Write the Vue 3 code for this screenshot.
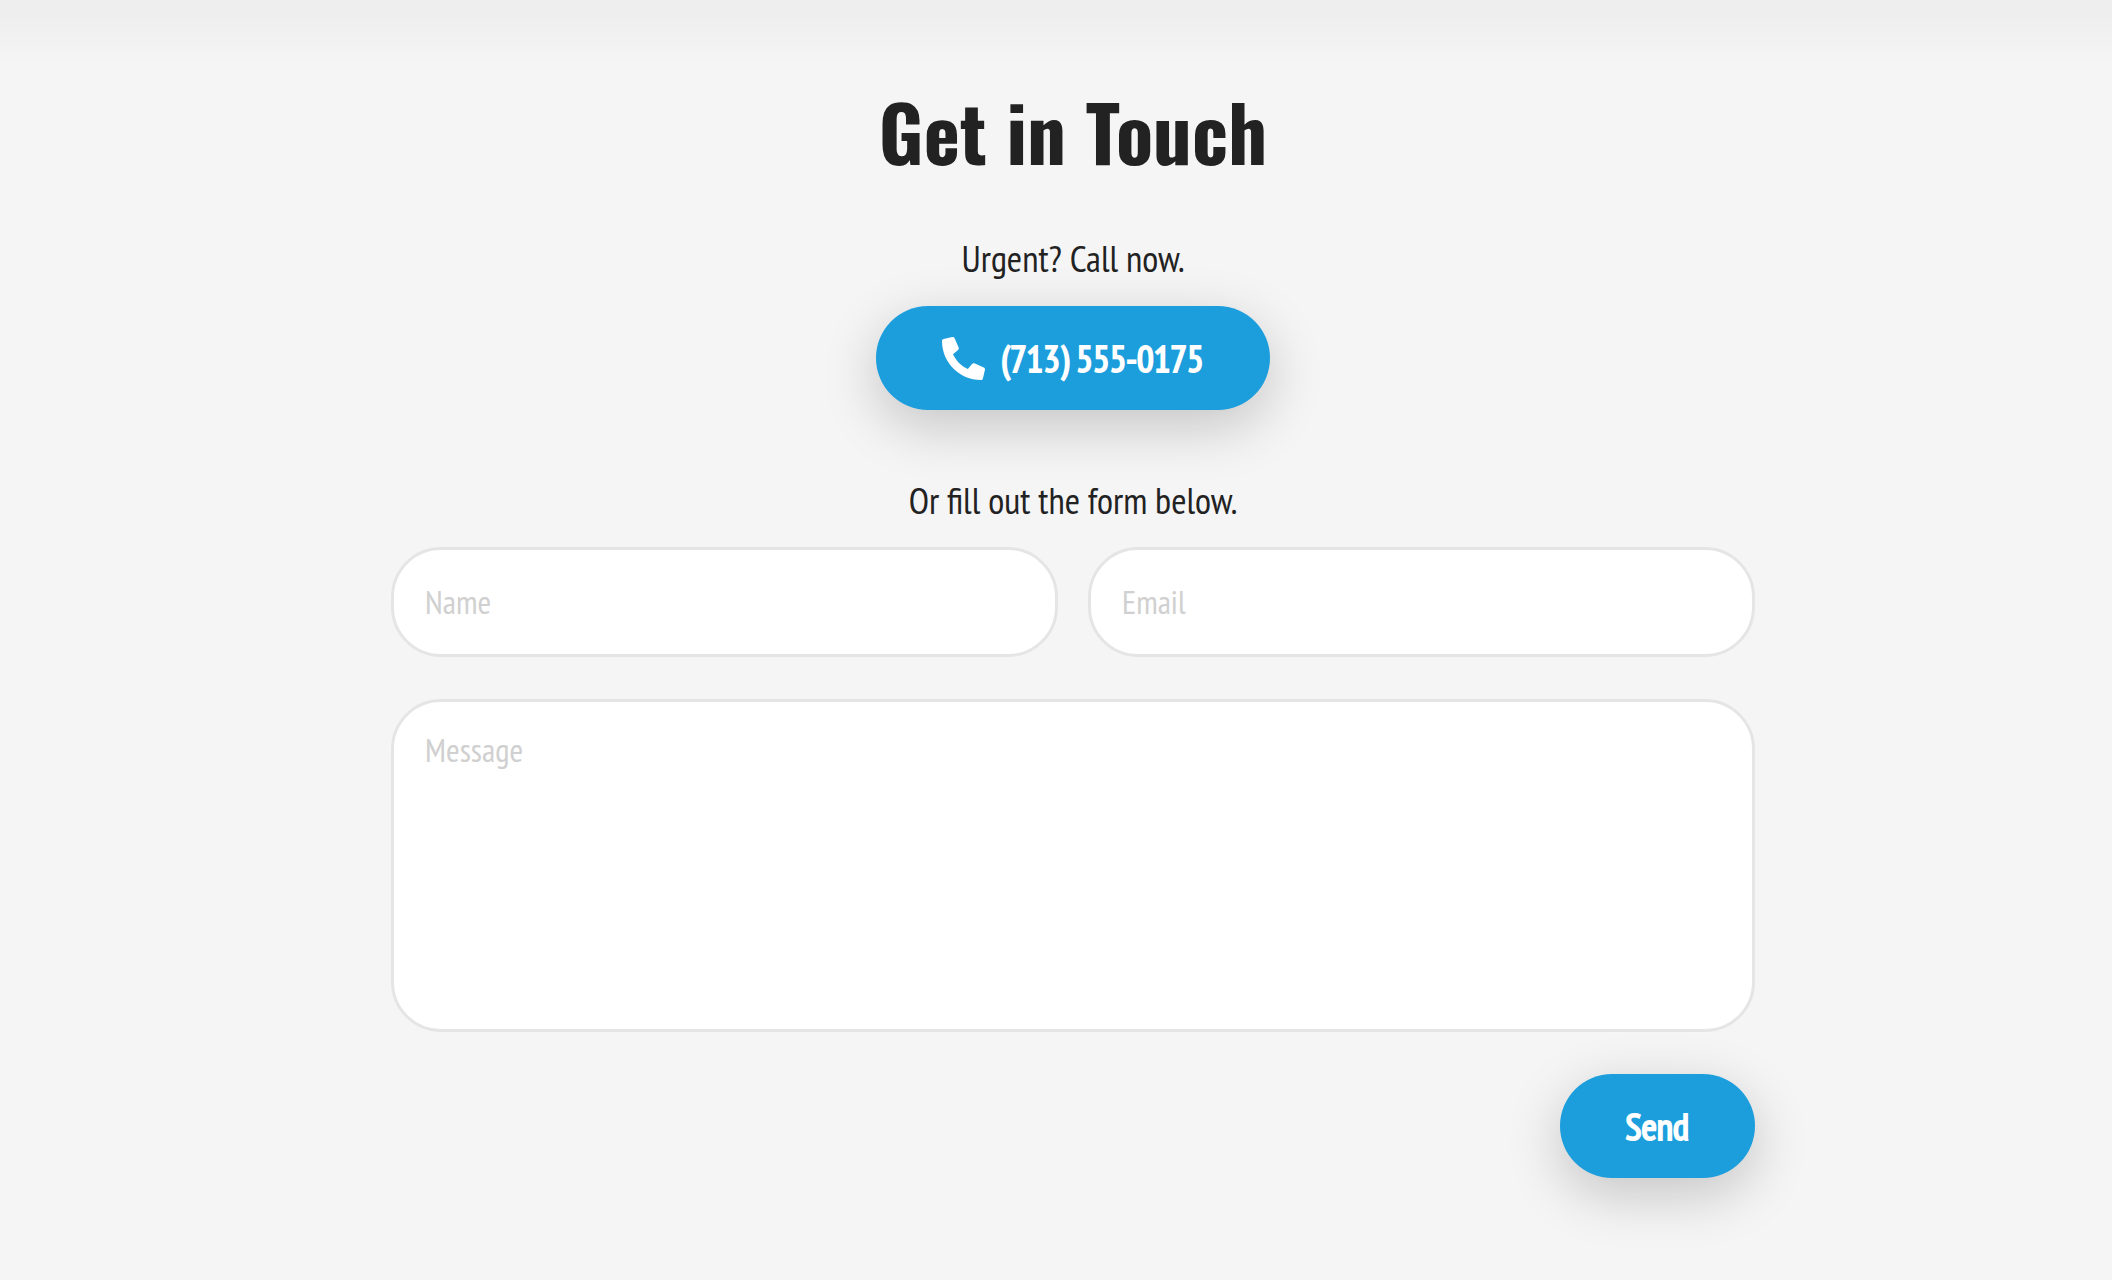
<script setup>
import { ref } from 'vue'

const name = ref('')
const email = ref('')
const message = ref('')
</script>

<template>
  <main class="contact">
    <div class="inner">
      <h1 class="title">Get in Touch</h1>
      <p class="lead">Urgent? Call now.</p>
      <a class="button call" href="tel:+17135550175">
        <svg class="phone" viewBox="0 0 512 512" aria-hidden="true">
          <path
            fill="currentColor"
            d="M493.400 24.600l-104-24c-11.300-2.600-22.900 3.300-27.500 13.900l-48 112c-4.200 9.800-1.400 21.300 6.900 28l60.600 49.600c-36 76.700-98.900 140.500-177.200 177.200l-49.600-60.600c-6.800-8.300-18.200-11.100-28-6.900l-112 48C3.900 366.500-2 378.100.6 389.400l24 104C27.100 504.200 36.700 512 48 512c256.100 0 464-207.500 464-464 0-11.200-7.700-20.900-18.600-23.400z"
            transform="translate(512 0) scale(-1 1)"
          />
        </svg>
        <span>(713) 555-0175</span>
      </a>
      <p class="lead">Or fill out the form below.</p>
      <form class="form" @submit.prevent>
        <div class="row">
          <input v-model="name" class="field" type="text" placeholder="Name" aria-label="Name" />
          <input v-model="email" class="field" type="email" placeholder="Email" aria-label="Email" />
        </div>
        <textarea v-model="message" class="field message" placeholder="Message" aria-label="Message"></textarea>
        <button class="button send" type="submit">Send</button>
      </form>
    </div>
  </main>
</template>

<style>
body {
  margin: 0;
  background: #f5f5f5;
}
</style>

<style scoped>
.contact {
  box-sizing: border-box;
  min-height: 100vh;
  padding: 74px 32px 96px 66px;
  background: linear-gradient(#eeeeee, #eeeeee 16px, #f5f5f5 64px);
  color: #222;
  font-family: "PT Sans Narrow", "Liberation Sans Narrow", "Liberation Sans", sans-serif;
}

.inner {
  display: flex;
  flex-direction: column;
  align-items: center;
  max-width: 1364px;
  margin: 0 auto;
}

.title {
  margin: 0 0 48px;
  font-family: Oswald, "Liberation Sans Narrow", "Liberation Sans", sans-serif;
  font-size: 77px;
  font-weight: 700;
  line-height: 112px;
}

.lead {
  margin: 0;
  font-size: 37px;
  line-height: 48px;
}

.button {
  display: flex;
  align-items: center;
  justify-content: center;
  box-sizing: border-box;
  height: 104px;
  border: 0;
  border-radius: 52px;
  background: #1c9edd;
  box-shadow: 0 16px 56px rgba(0, 0, 0, 0.2);
  color: #fff;
  font-family: inherit;
  font-size: 37px;
  font-weight: 400;
  line-height: 48px;
  text-decoration: none;
  -webkit-text-stroke: 2px currentColor;
}

.call {
  gap: 16px;
  margin: 24px 0 66px;
  padding: 0 66px;
}

.phone {
  width: 43px;
  height: 43px;
}

.form {
  display: flex;
  flex-direction: column;
  align-self: stretch;
  gap: 42px;
  margin-top: 23px;
}

.row {
  display: flex;
  gap: 30px;
}

.field {
  box-sizing: border-box;
  flex: 1;
  min-width: 0;
  height: 110px;
  margin: 0;
  padding: 0 31px 2px;
  border: 3px solid #e5e5e5;
  border-radius: 50px;
  background: #fff;
  color: #222;
  font-family: inherit;
  font-size: 33px;
  line-height: 40px;
  outline: 0;
}

.field::placeholder {
  color: #d0d0d0;
  opacity: 1;
}

.message {
  flex: none;
  height: 333px;
  padding: 28px 31px;
  resize: none;
}

.send {
  align-self: flex-end;
  padding: 0 66px;
}
</style>
